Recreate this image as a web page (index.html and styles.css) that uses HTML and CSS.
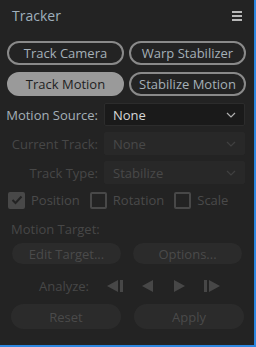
FILE: index.html
```html
<!DOCTYPE html>
<html lang="en">
<head>
  <meta charset="UTF-8">
  <title>Tracker</title>
  <link rel="stylesheet" href="styles.css">
</head>
<body>
  <div class="panel">
    <div class="header">
      <span class="title">Tracker</span>
      <span class="menu"><i></i><i></i><i></i></span>
    </div>

    <div class="modes">
      <button class="pill">Track Camera</button>
      <button class="pill">Warp Stabilizer</button>
      <button class="pill active">Track Motion</button>
      <button class="pill">Stabilize Motion</button>
    </div>

    <div class="fields">
      <label class="field-label">Motion Source:</label>
      <div class="select">
        <span>None</span>
        <svg width="10" height="6" viewBox="0 0 10 6"><path d="M1 1l4 4 4-4" fill="none" stroke="currentColor" stroke-width="1.2"/></svg>
      </div>
      <label class="field-label off">Current Track:</label>
      <div class="select off">
        <span>None</span>
        <svg width="10" height="6" viewBox="0 0 10 6"><path d="M1 1l4 4 4-4" fill="none" stroke="currentColor" stroke-width="1.2"/></svg>
      </div>
      <label class="field-label off">Track Type:</label>
      <div class="select off">
        <span>Stabilize</span>
        <svg width="10" height="6" viewBox="0 0 10 6"><path d="M1 1l4 4 4-4" fill="none" stroke="currentColor" stroke-width="1.2"/></svg>
      </div>
    </div>

    <div class="checks">
      <span class="check"><span class="box on"><svg width="12" height="10" viewBox="0 0 12 10"><path d="M1.5 5l3 3 6-6.5" fill="none" stroke="currentColor" stroke-width="2"/></svg></span>Position</span>
      <span class="check"><span class="box"></span>Rotation</span>
      <span class="check"><span class="box"></span>Scale</span>
    </div>

    <div class="section-label">Motion Target:</div>

    <div class="actions">
      <button class="flat">Edit Target...</button>
      <button class="flat">Options...</button>
    </div>

    <div class="analyze">
      <span class="analyze-label">Analyze:</span>
      <svg width="16" height="12" viewBox="0 0 16 12"><path d="M11 0v12L0 6z" fill="currentColor"/><rect x="13" y="0" width="3" height="12" fill="currentColor"/></svg>
      <svg width="12" height="12" viewBox="0 0 12 12"><path d="M11 0v12L0 6z" fill="currentColor"/></svg>
      <svg width="12" height="12" viewBox="0 0 12 12"><path d="M1 0v12l11-6z" fill="currentColor"/></svg>
      <svg width="16" height="12" viewBox="0 0 16 12"><rect x="0" y="0" width="3" height="12" fill="currentColor"/><path d="M5 0v12l11-6z" fill="currentColor"/></svg>
    </div>

    <div class="actions bottom">
      <button class="flat">Reset</button>
      <button class="flat">Apply</button>
    </div>
  </div>
</body>
</html>
```

FILE: styles.css
```css
body {
  margin: 0;
  background: #232323;
  font-family: 'Open Sans', 'Noto Sans', sans-serif;
}

.panel {
  width: 254px;
  height: 345px;
  background: #232323;
  border-right: 2px solid #2d87e0;
  border-bottom: 2px solid #2d87e0;
  overflow: hidden;
}

.header {
  display: flex;
  align-items: center;
  justify-content: space-between;
  height: 33px;
  padding: 0 12px 0 12px;
}

.title {
  font-size: 14px;
  color: #9fb0bd;
  margin-top: -2px;
}

.menu {
  display: flex;
  flex-direction: column;
  gap: 2px;
  margin-top: -2px;
}

.menu i {
  display: block;
  width: 10px;
  height: 2px;
  background: #b8b8b8;
}

.modes {
  display: grid;
  grid-template-columns: 117px 117px;
  column-gap: 5px;
  row-gap: 7px;
  padding: 8px 0 0 7px;
}

.pill {
  height: 24px;
  border: 2px solid #8a8a8a;
  border-radius: 12px;
  background: transparent;
  color: #a5b0b8;
  font-family: inherit;
  font-size: 13px;
  padding: 0;
  white-space: nowrap;
}

.pill.active {
  background: #9a9a9a;
  border-color: #9a9a9a;
  color: #1f1f1f;
}

.fields {
  display: grid;
  grid-template-columns: 98px 141px;
  column-gap: 6px;
  row-gap: 6px;
  padding: 7px 0 0 0;
  align-items: center;
}

.field-label {
  text-align: right;
  font-size: 13px;
  color: #a5b0b8;
}

.field-label.off {
  color: #474747;
}

.select {
  display: flex;
  align-items: center;
  justify-content: space-between;
  height: 21px;
  padding: 0 8px 0 8px;
  background: #1a1a1a;
  border: 1px solid #2c2c2c;
  border-radius: 2px;
  color: #d8d8d8;
  font-size: 13px;
}

.select svg {
  color: #b0b0b0;
}

.select.off {
  background: #282828;
  border-color: #282828;
  color: #484848;
}

.select.off svg {
  color: #404040;
}

.checks {
  display: flex;
  gap: 10px;
  padding: 7px 0 0 8px;
  font-size: 13px;
  color: #4a4a4a;
}

.check {
  display: flex;
  align-items: center;
  gap: 6px;
}

.box {
  display: flex;
  align-items: center;
  justify-content: center;
  width: 13px;
  height: 13px;
  border: 2px solid #484848;
  border-radius: 2px;
}

.box.on {
  background: #484848;
  color: #232323;
}

.section-label {
  padding: 11px 0 0 11px;
  font-size: 13px;
  color: #474747;
}

.actions {
  display: grid;
  grid-template-columns: 109px 109px;
  column-gap: 12px;
  padding: 5px 0 0 12px;
}

.flat {
  height: 21px;
  border: none;
  border-radius: 11px;
  background: #2b2b2b;
  color: #4a4a4a;
  font-family: inherit;
  font-size: 13px;
  padding: 0;
}

.analyze {
  display: flex;
  align-items: center;
  gap: 19px;
  padding: 13px 0 0 39px;
  color: #474747;
}

.analyze-label {
  font-size: 13px;
  margin-right: -1px;
}

.actions.bottom {
  padding: 9px 0 0 11px;
  grid-template-columns: 110px 110px;
  column-gap: 13px;
}

.actions.bottom .flat {
  height: 25px;
  border-radius: 13px;
}
```
